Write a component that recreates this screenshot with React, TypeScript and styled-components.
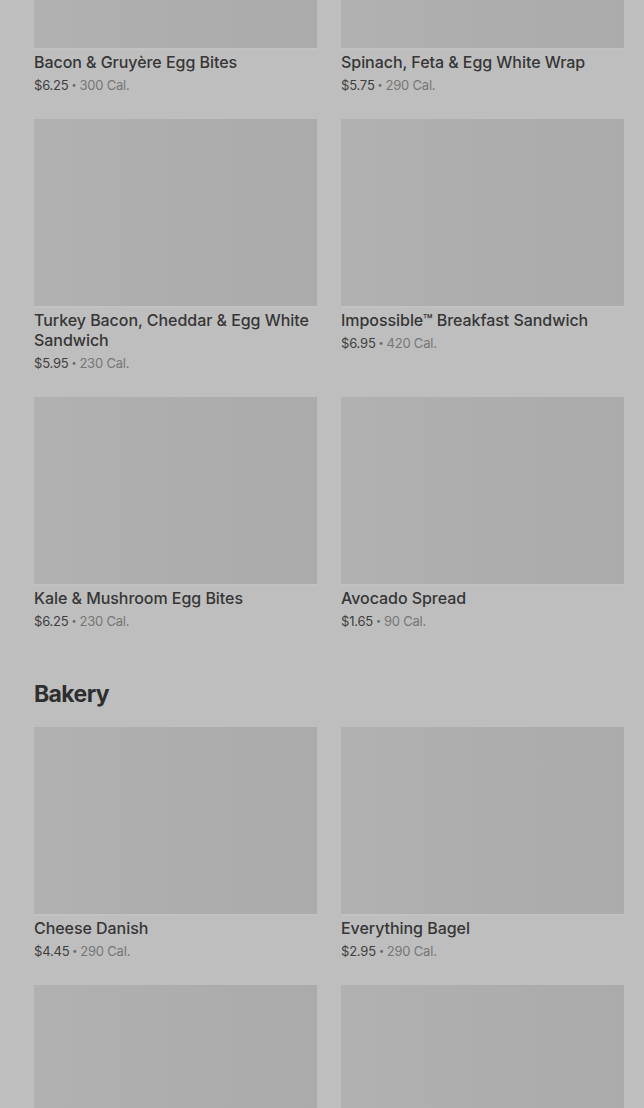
import React from 'react'
import styled, { createGlobalStyle } from 'styled-components'

type Item = { name: string; price: string; cal: number }

const breakfast: Item[] = [
  { name: 'Bacon & Gruyère Egg Bites', price: '$6.25', cal: 300 },
  { name: 'Spinach, Feta & Egg White Wrap', price: '$5.75', cal: 290 },
  { name: 'Turkey Bacon, Cheddar & Egg White Sandwich', price: '$5.95', cal: 230 },
  { name: 'Impossible™ Breakfast Sandwich', price: '$6.95', cal: 420 },
  { name: 'Kale & Mushroom Egg Bites', price: '$6.25', cal: 230 },
  { name: 'Avocado Spread', price: '$1.65', cal: 90 },
]

const bakery: Item[] = [
  { name: 'Cheese Danish', price: '$4.45', cal: 290 },
  { name: 'Everything Bagel', price: '$2.95', cal: 290 },
  { name: 'Butter Croissant', price: '$3.25', cal: 260 },
  { name: 'Blueberry Muffin', price: '$3.45', cal: 360 },
]

const App = () => {
  return (
    <>
      <GlobalStyle />
      <Page>
        <Section>
          <Grid>
            {breakfast.map((item) => (
              <MenuCard key={item.name} item={item} />
            ))}
          </Grid>
        </Section>
        <Section>
          <SectionTitle>Bakery</SectionTitle>
          <Grid>
            {bakery.map((item) => (
              <MenuCard key={item.name} item={item} />
            ))}
          </Grid>
        </Section>
      </Page>
    </>
  )
}

const MenuCard = ({ item }: { item: Item }) => (
  <Card>
    <Thumb />
    <Name>{item.name}</Name>
    <Meta>
      <Price>{item.price}</Price>
      <Dot>•</Dot>
      <Cal>{item.cal} Cal.</Cal>
    </Meta>
  </Card>
)

export default App

const GlobalStyle = createGlobalStyle`
  html, body {
    margin: 0;
    padding: 0;
    background: #bebebe;
    overflow: hidden;
  }
  body {
    font-family: Inter, "Noto Sans", sans-serif;
    -webkit-font-smoothing: antialiased;
  }
`

const Page = styled.div`
  height: 1108px;
  overflow: hidden;
  padding: 0 20px 0 34px;
`

const Section = styled.section`
  &:first-child {
    margin-top: -139px;
  }
  & + & {
    margin-top: 46px;
  }
`

const SectionTitle = styled.h2`
  margin: 0 0 16px;
  font-size: 23px;
  line-height: 34px;
  font-weight: 700;
  letter-spacing: -0.6px;
  color: #2e2e2e;
`

const Grid = styled.div`
  display: grid;
  grid-template-columns: 1fr 1fr;
  column-gap: 24px;
  row-gap: 24px;
`

const Card = styled.div`
  display: flex;
  flex-direction: column;
`

const Thumb = styled.div`
  height: 187px;
  background: linear-gradient(90deg, #b1b1b1 0%, #adadad 55%, #ababab 100%);
  box-shadow: 0 2px 0 #c2c2c2;
`

const Name = styled.div`
  margin-top: 4px;
  font-size: 16px;
  line-height: 20px;
  font-weight: 500;
  letter-spacing: -0.05px;
  color: #363636;
`

const Meta = styled.div`
  margin-top: 3px;
  display: flex;
  align-items: center;
  gap: 3px;
  font-size: 13px;
  line-height: 20px;
  letter-spacing: -0.2px;
`

const Price = styled.span`
  color: #404040;
`

const Dot = styled.span`
  color: #6a6a6a;
  font-size: 9px;
`

const Cal = styled.span`
  color: #767676;
`
